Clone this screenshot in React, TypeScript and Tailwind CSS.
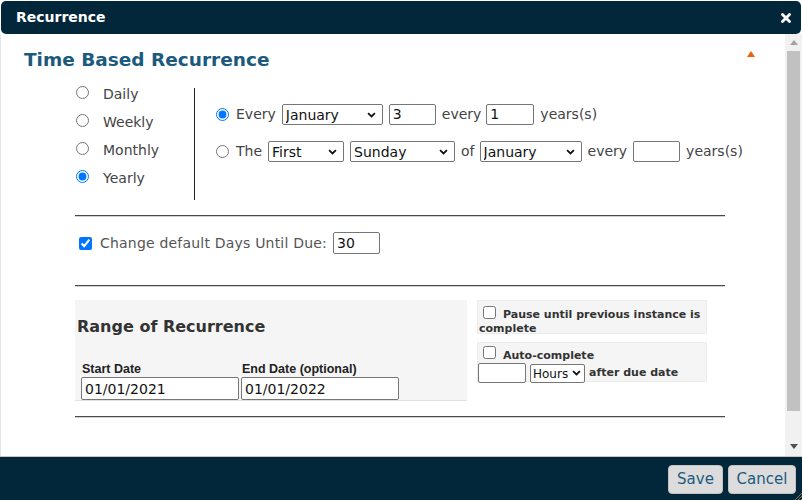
import React from 'react';

type BoxProps = { value?: string; className: string };

// native select with the chevron drawn over it
function Select({ value = '', className, small = false }: BoxProps & { small?: boolean }) {
  return (
    <div className={`relative bg-white border border-[#767676] rounded-[2px] ${className}`}>
      <select
        defaultValue={value}
        className={`appearance-none w-full h-full bg-transparent outline-none text-[#111] ${
          small ? 'pl-[2px] text-[12px]' : 'pl-[3px] text-[14px]'
        }`}
      >
        <option>{value}</option>
      </select>
      <svg
        viewBox="0 0 10 7"
        className={`pointer-events-none absolute top-1/2 -translate-y-1/2 ${
          small ? 'right-[3px] w-[9px] h-[6px]' : 'right-[6px] w-[9px] h-[6px]'
        }`}
      >
        <path d="M1 1.2 L5 5.2 L9 1.2" fill="none" stroke="#111" strokeWidth="2" />
      </svg>
    </div>
  );
}

function TextBox({ value = '', className }: BoxProps) {
  return (
    <input
      type="text"
      defaultValue={value}
      className={`bg-white border border-[#767676] rounded-[2px] px-[3px] text-[14px] text-[#111] outline-none ${className}`}
    />
  );
}

function Radio({ name, checked = false }: { name: string; checked?: boolean }) {
  return <input type="radio" name={name} defaultChecked={checked} className="m-0 w-[13px] h-[13px] shrink-0" />;
}

function Divider() {
  return <div className="ml-[74px] w-[650px] h-0 border-t border-t-[#4a4a4a] border-b border-b-[#d2d2d2]" />;
}

const frequencies = ['Daily', 'Weekly', 'Monthly', 'Yearly'];

export default function App() {
  return (
    <div className="w-[802px] h-[500px] flex flex-col bg-white overflow-hidden font-['DejaVu_Sans',Verdana,sans-serif]">
      {/* title bar */}
      <div className="mx-[1px] mt-[1px] h-[33px] shrink-0 rounded-[5px] bg-[#02263a] flex items-center justify-between pl-[15px] pr-[10px]">
        <span className="text-white font-bold text-[14px]">Recurrence</span>
        <svg viewBox="0 0 10 10" className="w-[10px] h-[10px]">
          <path d="M1.5 1.5 L8.5 8.5 M8.5 1.5 L1.5 8.5" stroke="#fff" strokeWidth="2.8" strokeLinecap="square" />
        </svg>
      </div>

      {/* body */}
      <div className="flex-1 flex border-l border-l-[#dfe7ec] min-h-0">
        <div className="flex-1 flex flex-col">
          <div className="mt-[14px] flex justify-between pl-[23px] pr-[30px]">
            <h1 className="text-[18.5px] leading-[24px] font-bold text-[#1b5a7e]">Time Based Recurrence</h1>
            <svg viewBox="0 0 8 6" className="mt-[3px] w-[8px] h-[6px]">
              <path d="M4 0 L8 6 L0 6 Z" fill="#e9630f" />
            </svg>
          </div>

          {/* pattern */}
          <div className="mt-[8px] ml-[74px] h-[120px] flex items-start text-[14px] text-[#444]">
            <div className="w-[119px] flex flex-col">
              {frequencies.map((f) => (
                <label key={f} className="h-[28px] flex items-center">
                  <span className="ml-[1px]"><Radio name="freq" checked={f === 'Yearly'} /></span>
                  <span className="ml-[14px]">{f}</span>
                </label>
              ))}
            </div>
            <div className="mt-[8px] h-[112px] border-l border-l-[#222] pl-[21px] pt-[16px] flex flex-col gap-[16px]">
              <div className="flex items-center h-[21px]">
                <Radio name="yearly" checked />
                <span className="ml-[7px] mr-[6px]">Every</span>
                <Select value="January" className="w-[101px] h-[21px]" />
                <TextBox value="3" className="ml-[6px] w-[47px] h-[21px]" />
                <span className="ml-[6px] mr-[5px]">every</span>
                <TextBox value="1" className="w-[48px] h-[21px]" />
                <span className="ml-[6px]">years(s)</span>
              </div>
              <div className="flex items-center h-[21px]">
                <Radio name="yearly" />
                <span className="ml-[7px] mr-[6px]">The</span>
                <Select value="First" className="w-[76px] h-[21px]" />
                <Select value="Sunday" className="ml-[6px] w-[105px] h-[21px]" />
                <span className="ml-[6px] mr-[5px]">of</span>
                <Select value="January" className="w-[102px] h-[21px]" />
                <span className="ml-[6px] mr-[6px]">every</span>
                <TextBox className="w-[47px] h-[21px]" />
                <span className="ml-[6px]">years(s)</span>
              </div>
            </div>
          </div>

          <div className="mt-[15px]"><Divider /></div>

          <label className="mt-[15px] ml-[78px] h-[22px] flex items-center text-[14px] text-[#555]">
            <input type="checkbox" defaultChecked className="m-0 w-[13px] h-[13px]" />
            <span className="ml-[8px] mr-[6px] tracking-[0.2px]">Change default Days Until Due:</span>
            <TextBox value="30" className="w-[47px] h-[22px]" />
          </label>

          <div className="mt-[31px]"><Divider /></div>

          {/* range */}
          <div className="mt-[13px] ml-[74px] flex items-start gap-[10px]">
            <div className="w-[392px] h-[101px] bg-[#f5f5f5] border-b border-b-[#e2e2e2] pl-[6px] pt-[17px]">
              <h2 className="ml-[-4px] text-[16px] leading-[20px] font-bold text-[#333]">Range of Recurrence</h2>
              <div className="mt-[23px] flex gap-[2px]">
                <div className="w-[158px] flex flex-col">
                  <span className="ml-[1px] h-[17px] text-[12.5px] font-bold text-[#222] font-['Liberation_Sans',Arial,sans-serif]">Start Date</span>
                  <TextBox value="01/01/2021" className="w-[158px] h-[23px]" />
                </div>
                <div className="w-[158px] flex flex-col">
                  <span className="ml-[1px] h-[17px] text-[12.5px] font-bold text-[#222] font-['Liberation_Sans',Arial,sans-serif]">End Date (optional)</span>
                  <TextBox value="01/01/2022" className="w-[158px] h-[23px]" />
                </div>
              </div>
            </div>

            <div className="w-[230px] flex flex-col gap-[8px] text-[11px] font-bold text-[#333]">
              <div className="h-[34px] bg-[#f5f5f5] border border-[#ececec] pl-[1px] pt-[5px] leading-[14px]">
                <input type="checkbox" className="m-0 ml-[4px] mr-[7px] w-[13px] h-[13px] align-[-1px]" />
                Pause until previous instance is complete
              </div>
              <div className="h-[40px] bg-[#f5f5f5] border border-[#ececec] pt-[3px]">
                <div className="flex items-start h-[17px]">
                  <input type="checkbox" className="m-0 ml-[5px] mr-[7px] w-[13px] h-[13px]" />
                  <span className="mt-[3px] leading-[14px]">Auto-complete</span>
                </div>
                <div className="flex items-center">
                  <TextBox className="w-[48px] h-[20px]" />
                  <Select value="Hours" small className="ml-[4px] w-[55px] h-[19px] font-normal" />
                  <span className="ml-[4px]">after due date</span>
                </div>
              </div>
            </div>
          </div>

          <div className="mt-[15px]"><Divider /></div>
        </div>

        {/* scrollbar */}
        <div className="w-[17px] bg-[#f1f1f1] flex flex-col items-center">
          <svg viewBox="0 0 8 5" className="mt-[6px] w-[8px] h-[5px]">
            <path d="M4 0 L8 5 L0 5 Z" fill="#a3a3a3" />
          </svg>
          <div className="mt-[6px] w-[13px] h-[360px] bg-[#c1c1c1]" />
          <svg viewBox="0 0 8 5" className="mt-auto mb-[7px] w-[8px] h-[5px]">
            <path d="M0 0 L8 0 L4 5 Z" fill="#505050" />
          </svg>
        </div>
      </div>

      {/* footer */}
      <div className="relative h-[44px] shrink-0 border-t border-t-[#d7c2ad] bg-[#02263a] flex items-center justify-end gap-[5px] pr-[6px] pt-[2px]">
        <button className="h-[29px] w-[55px] rounded-[4px] bg-[#dcdcdc] border border-[#c3c3c3] text-[15px] text-[#1d5a7f]">
          Save
        </button>
        <button className="h-[29px] w-[68px] rounded-[4px] bg-[#dcdcdc] border border-[#c3c3c3] text-[15px] text-[#1d5a7f]">
          Cancel
        </button>
        <svg viewBox="0 0 8 8" className="absolute right-0 bottom-0 w-[8px] h-[8px]">
          <path d="M8 1 L1 8 M8 4 L4 8 M8 7 L7 8" stroke="#b98a5a" strokeWidth="0.8" />
        </svg>
      </div>
    </div>
  );
}
